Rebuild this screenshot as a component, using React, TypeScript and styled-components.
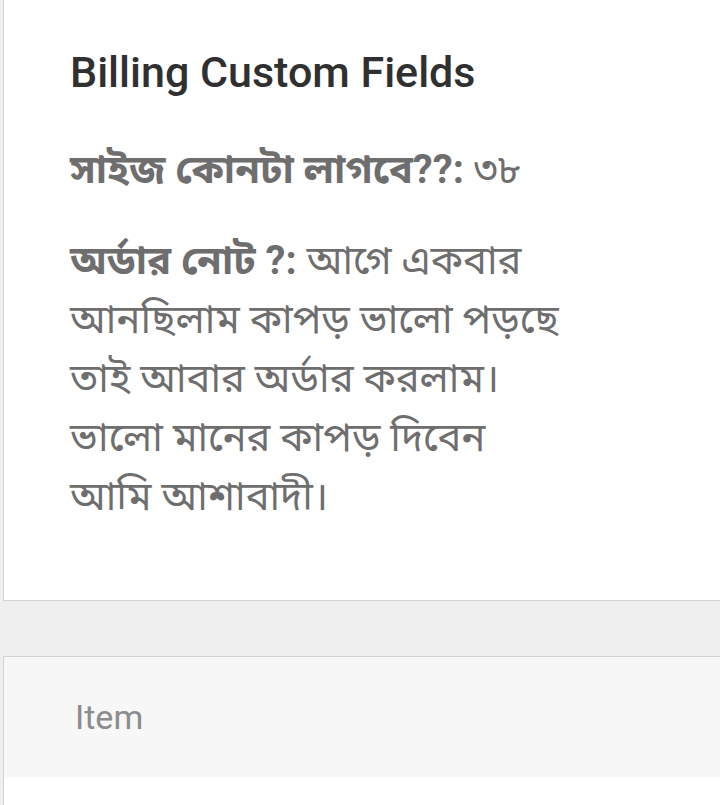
import React from 'react'
import styled, { createGlobalStyle } from 'styled-components'

const GlobalStyle = createGlobalStyle`
  html, body {
    margin: 0;
    padding: 0;
    background: #efefef;
  }
  body {
    font-family: Roboto, "Noto Sans", "Noto Sans Bengali", sans-serif;
  }
`

const Page = styled.div`
  width: 720px;
  height: 805px;
  overflow: hidden;
  padding-left: 3px;
  box-sizing: border-box;
  display: flex;
  flex-direction: column;
  gap: 55px;
`

const Card = styled.div<{ $first?: boolean }>`
  background: #fff;
  border: 1px solid #d2d2d2;
  border-right: none;
  border-top: ${p => (p.$first ? 'none' : '1px solid #d2d2d2')};
`

const FieldsBody = styled.div`
  padding: 48px 0 0 66px;
  height: 600px;
  box-sizing: border-box;
`

const Title = styled.h2`
  margin: 0 0 43px;
  font-size: 43px;
  font-weight: 500;
  color: #303030;
  line-height: 49px;
`

const Field = styled.p`
  margin: 0 0 32px;
  font-size: 40px;
  line-height: 59px;
  color: #6e6e6e;
  white-space: nowrap;
`

const Label = styled.strong`
  font-weight: 700;
`

const TableHead = styled.div`
  background: #f7f7f7;
  height: 120px;
  padding-left: 71px;
  display: flex;
  align-items: center;
  font-size: 34px;
  color: #8c8c8c;
`

const TableBody = styled.div`
  height: 200px;
`

export default function App() {
  return (
    <>
      <GlobalStyle />
      <Page>
        <Card $first>
          <FieldsBody>
            <Title>Billing Custom Fields</Title>
            <Field>
              <Label>সাইজ কোনটা লাগবে??:</Label> ৩৮
            </Field>
            <Field>
              <Label>অর্ডার নোট ?:</Label> আগে একবার
              <br />
              আনছিলাম কাপড় ভালো পড়ছে
              <br />
              তাই আবার অর্ডার করলাম।
              <br />
              ভালো মানের কাপড় দিবেন
              <br />
              আমি আশাবাদী।
            </Field>
          </FieldsBody>
        </Card>
        <Card>
          <TableHead>Item</TableHead>
          <TableBody />
        </Card>
      </Page>
    </>
  )
}
